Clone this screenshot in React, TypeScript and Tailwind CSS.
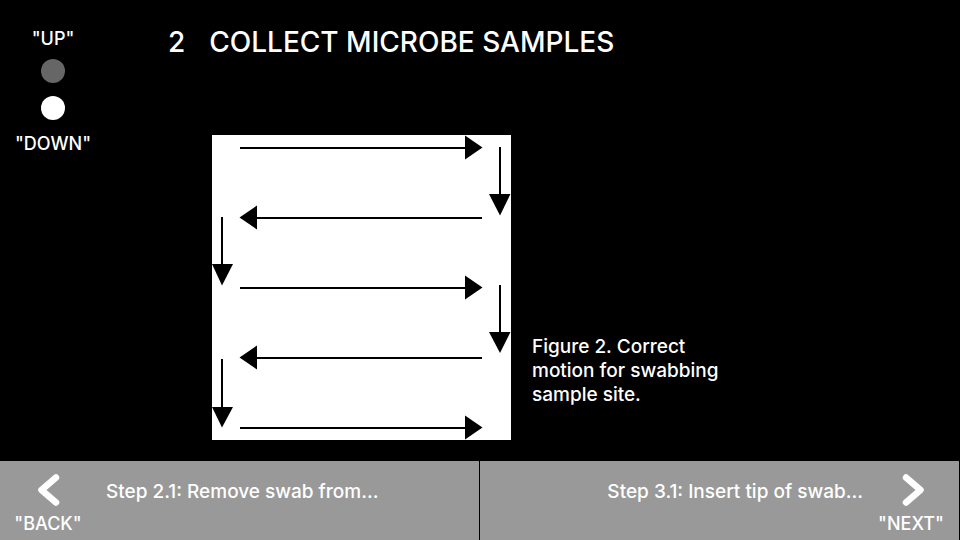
import React from "react";

type Arrow = { x1: number; y1: number; x2: number; y2: number; head: string };

const arrows: Arrow[] = [
  { x1: 28, y1: 13, x2: 254, y2: 13, head: "253,0.5 270.5,12.5 253,24.5" },
  { x1: 288, y1: 12, x2: 288, y2: 60, head: "277,59 298.5,59 288,80.5" },
  { x1: 270, y1: 83, x2: 44, y2: 83, head: "45,70.5 27.5,82.5 45,94.5" },
  { x1: 10, y1: 82, x2: 10, y2: 130, head: "0,129 21,129 10,150.5" },
  { x1: 28, y1: 153, x2: 254, y2: 153, head: "253,140.5 270.5,152.5 253,164.5" },
  { x1: 288, y1: 150, x2: 288, y2: 198, head: "277,197 298.5,197 288,218" },
  { x1: 270, y1: 223, x2: 44, y2: 223, head: "45,210.5 27.5,222.5 45,234.5" },
  { x1: 10, y1: 224, x2: 10, y2: 273, head: "0,272 21,272 10,292.5" },
  { x1: 28, y1: 293, x2: 254, y2: 293, head: "253,280.5 270.5,292.5 253,304.5" },
];

function SwabDiagram() {
  return (
    <svg
      viewBox="0 0 299 305"
      className="w-[299px] shrink-0 bg-white"
      role="img"
      aria-label="Swab side to side, moving down after each pass"
    >
      {arrows.map((a, i) => (
        <g key={i}>
          <line x1={a.x1} y1={a.y1} x2={a.x2} y2={a.y2} stroke="black" strokeWidth="2" />
          <polygon points={a.head} fill="black" />
        </g>
      ))}
    </svg>
  );
}

function Chevron({ points }: { points: string }) {
  return (
    <svg viewBox="0 0 24 32" className="h-8 w-6 overflow-visible" aria-hidden="true">
      <polyline
        points={points}
        fill="none"
        stroke="white"
        strokeWidth="6.5"
        strokeLinecap="round"
        strokeLinejoin="round"
      />
    </svg>
  );
}

export default function App() {
  return (
    <div className="flex min-h-screen flex-col bg-black font-['Inter','Liberation_Sans',sans-serif] text-[19px] leading-6 font-medium text-white">
      <div className="flex flex-1">
        <nav className="flex w-[106px] shrink-0 flex-col items-center pt-[27px] text-lg leading-6" aria-label="Page">
          <button type="button">"UP"</button>
          <span className="mt-2 size-6 rounded-full bg-[#666666]" />
          <span className="mt-[13px] size-6 rounded-full bg-white" />
          <button type="button" className="mt-3">"DOWN"</button>
        </nav>
        <main className="flex-1 pt-[26px] pl-[62px]">
          <h1 className="flex gap-6 text-[28px] leading-8">
            <span>2</span>
            <span>COLLECT MICROBE SAMPLES</span>
          </h1>
          <figure className="mt-[77px] ml-11 flex items-end gap-[21px]">
            <SwabDiagram />
            <figcaption className="mb-[33px] w-[200px]">
              Figure 2. Correct motion for swabbing sample site.
            </figcaption>
          </figure>
        </main>
      </div>
      <footer className="grid grid-cols-2 text-left">
        <button
          type="button"
          className="flex h-[79px] items-start border-r border-black bg-[#999999] pt-[13px]"
        >
          <span className="flex w-24 flex-col items-center gap-[6px]">
            <Chevron points="20,3.5 5.5,16 20,28.5" />
            <span className="text-lg leading-6">"BACK"</span>
          </span>
          <span className="ml-[10px] pt-[6px]">Step 2.1: Remove swab from...</span>
        </button>
        <button
          type="button"
          className="flex h-[79px] items-start justify-end border-r border-black bg-[#999999] pt-[13px]"
        >
          <span className="pt-[6px]">Step 3.1: Insert tip of swab...</span>
          <span className="flex w-24 flex-col items-center gap-[6px]">
            <Chevron points="7,3.5 21.5,16 7,28.5" />
            <span className="text-lg leading-6">"NEXT"</span>
          </span>
        </button>
      </footer>
    </div>
  );
}
